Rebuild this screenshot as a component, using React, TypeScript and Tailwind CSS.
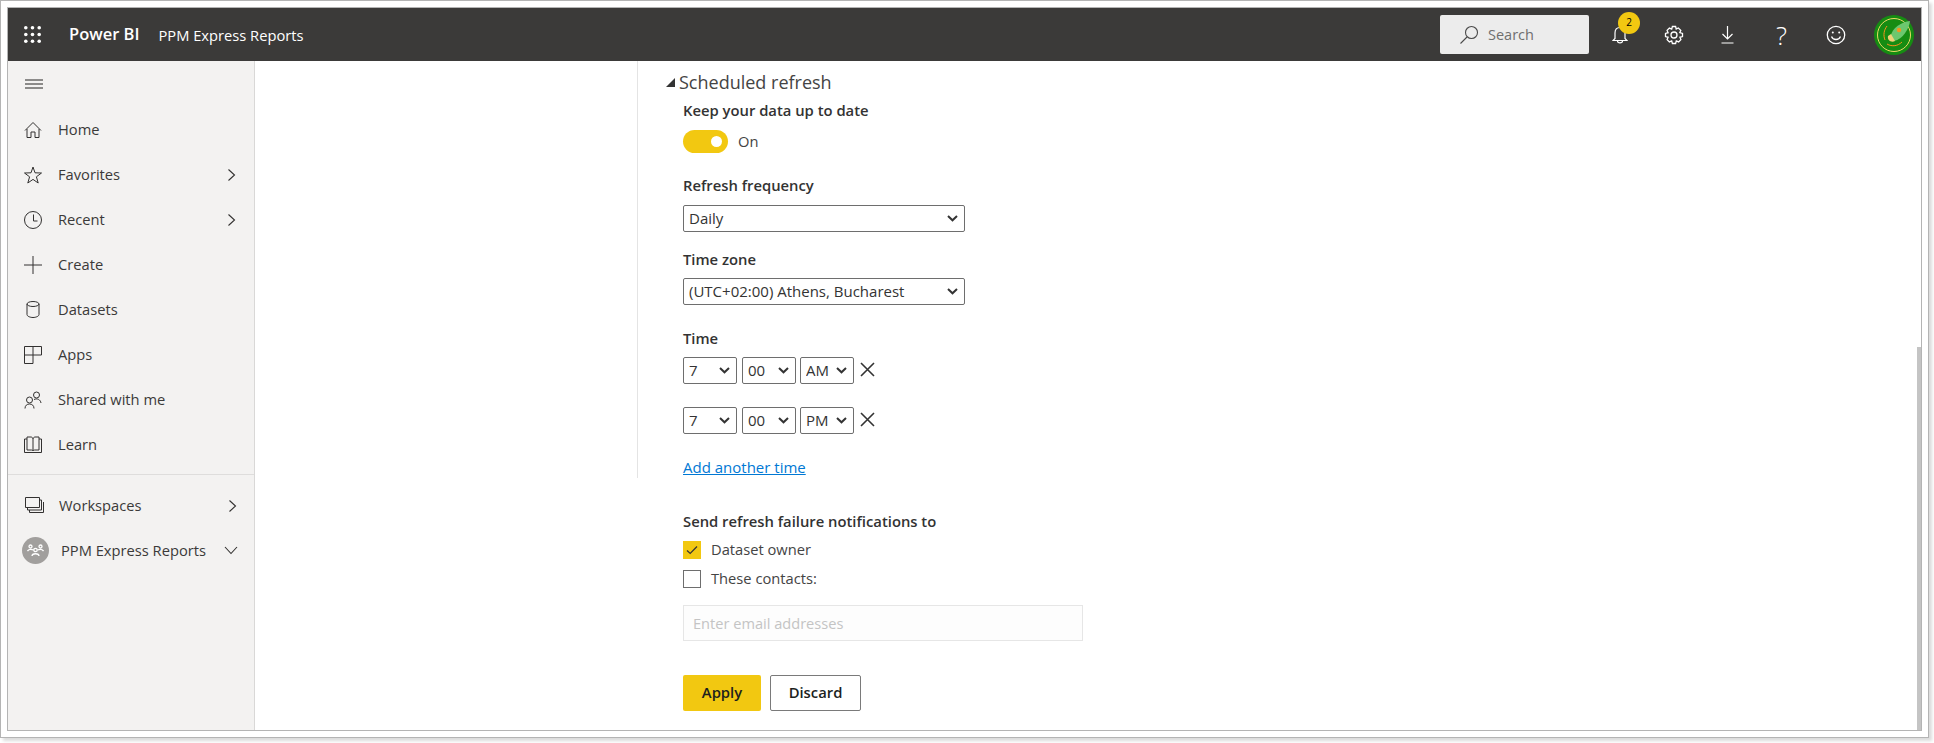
import React from "react";

const stroke = { fill: "none", stroke: "currentColor", strokeWidth: 1 } as const;

const Chevron = () => (
  <svg width="10" height="16" viewBox="0 0 10 16" {...stroke} strokeWidth={1.1}>
    <path d="M1.5 2.5 L7.5 8 L1.5 13.5" />
  </svg>
);

const navTop = [
  { label: "Home", chev: false, w: 18, h: 18, box: "0 0 18 18", icon: <path d="M1 9.5 L9 1.5 L17 9.5 M3 8 V16.5 H7 V11 H11 V16.5 H15 V8" /> },
  { label: "Favorites", chev: true, w: 18, h: 18, box: "0 0 18 18", icon: <path d="M9 1 L11 6.8 L17.5 7 L12.4 10.8 L14.2 17 L9 13.4 L3.8 17 L5.6 10.8 L0.5 7 L7 6.8 Z" /> },
  { label: "Recent", chev: true, w: 18, h: 18, box: "0 0 18 18", icon: <><circle cx="9" cy="9" r="8.5" /><path d="M9.5 3.5 V10 H13.5" /></> },
  { label: "Create", chev: false, w: 18, h: 18, box: "0 0 18 18", icon: <path d="M9 0 V18 M0 9 H18" /> },
  { label: "Datasets", chev: false, w: 14, h: 17, box: "0 0 14 17", icon: <><ellipse cx="7" cy="3" rx="6" ry="2.5" /><path d="M1 3 V13.5 C1 15.2 4 16.5 7 16.5 C10 16.5 13 15.2 13 13.5 V3" /></> },
  { label: "Apps", chev: false, w: 18, h: 18, box: "0 0 18 18", icon: <path d="M0.5 0.5 H17.5 V9 H0.5 Z M0.5 9 V17.5 H9 V0.5" /> },
  { label: "Shared with me", chev: false, w: 18, h: 18, box: "0 0 18 18", icon: <><circle cx="5.5" cy="9" r="3" /><path d="M1 17.5 C1 14.5 3 13 5.5 13 C8 13 10 14.5 10 17.5" /><circle cx="12.5" cy="4" r="3" /><path d="M10 8.5 C13 7 16.5 8.5 17 12" /></> },
  { label: "Learn", chev: false, w: 18, h: 17, box: "0 0 18 17", icon: <path d="M3 1 H7 C8 1 9 2 9 3 V15 C9 14.3 8 14 7 14 H3 Z M15 1 H11 C10 1 9 2 9 3 M15 1 V14 H11 C10 14 9 14.3 9 15 M3 3 H0.5 V16.5 H17.5 V3 H15" /> },
];

const TimeSelect = ({ value, options, width }: { value: string; options: string[]; width: string }) => (
  <div className={`relative h-[27px] ${width}`}>
    <select
      defaultValue={value}
      className="h-full w-full appearance-none rounded-[2px] border border-[#6e6e6e] bg-white pl-[5px] text-[15px] text-[#333333] outline-none"
    >
      {options.map((o) => (
        <option key={o}>{o}</option>
      ))}
    </select>
    <svg className="absolute right-[7px] top-[10px] text-[#333333]" width="11" height="7" viewBox="0 0 11 7" fill="none" stroke="currentColor" strokeWidth="2">
      <path d="M1 1 L5.5 5.3 L10 1" />
    </svg>
  </div>
);

const XIcon = () => (
  <svg className="ml-[6px] mt-[-3px] text-[#333333]" width="15" height="15" viewBox="0 0 15 15" fill="none" stroke="currentColor" strokeWidth="1.6">
    <path d="M1 1 L14 14 M14 1 L1 14" />
  </svg>
);

const TimeRow = ({ period, className }: { period: string; className: string }) => (
  <div className={`flex h-[27px] items-center ${className}`}>
    <TimeSelect value="7" options={["7"]} width="w-[54px]" />
    <TimeSelect value="00" options={["00"]} width="ml-[5px] w-[54px]" />
    <TimeSelect value={period} options={[period]} width="ml-[4px] w-[54px]" />
    <XIcon />
  </div>
);

export default function App() {
  return (
    <div className="h-[743px] w-[1934px] overflow-hidden bg-white font-['Open_Sans',sans-serif] text-[#333333]">
      <div className="h-[738px] w-[1929px] border border-[#b4b4b4] bg-white p-[6px] shadow-[3px_3px_3px_rgba(0,0,0,0.14)]">
        <div className="flex h-[724px] w-[1915px] flex-col border border-[#b4b4b4]">
          {/* Top bar */}
          <header className="flex h-[53px] shrink-0 items-center bg-[#3b3a39] text-white">
            <svg className="ml-[16px]" width="17" height="17" viewBox="0 0 17 17" fill="#ffffff">
              {[1.8, 8.5, 15.2].flatMap((y) =>
                [1.8, 8.5, 15.2].map((x) => <circle key={`${x}-${y}`} cx={x} cy={y} r="1.8" />)
              )}
            </svg>
            <span className="ml-[28px] text-[16.5px] font-semibold">Power BI</span>
            <span className="ml-[19px] mt-[2px] text-[14.7px]">PPM Express Reports</span>

            <div className="ml-auto flex h-[39px] w-[149px] items-center rounded-[2px] bg-[#ececec] pl-[19px] text-[#6f6f6f]">
              <svg width="20" height="20" viewBox="0 0 20 20" fill="none" stroke="#4a4a4a" strokeWidth="1.1">
                <circle cx="12.5" cy="7.5" r="6" />
                <path d="M8 12 L1.5 18.5" />
              </svg>
              <span className="ml-[9px] text-[14.5px]">Search</span>
            </div>

            <div className="relative ml-[23px] flex w-[16px] justify-center">
              <svg width="16" height="18" viewBox="0 0 16 18" fill="none" stroke="#ffffff" strokeWidth="1.2">
                <path d="M3 12.5 V7 C3 3.5 5 1.5 8 1.5 C11 1.5 13 3.5 13 7 V12.5 L15 14.5 H1 Z M5.5 15 C5.5 17.5 10.5 17.5 10.5 15" />
              </svg>
              <span className="absolute left-[6px] top-[-14px] flex h-[22px] w-[22px] items-center justify-center rounded-full bg-[#f2c811] text-[10px] text-black">2</span>
            </div>

            <svg className="ml-[36px]" width="20" height="20" viewBox="0 0 20 20" fill="none" stroke="#ffffff" strokeWidth="1.3">
              <circle cx="10" cy="10" r="3" />
              <path d="M8.4 1.5 H11.6 L12.2 4 L14.3 3 L16.8 5.3 L15.8 7.6 L18.5 8.4 V11.6 L15.9 12.3 L16.9 14.6 L14.6 16.9 L12.3 15.9 L11.6 18.5 H8.4 L7.7 15.9 L5.4 16.9 L3.1 14.6 L4.1 12.3 L1.5 11.6 V8.4 L4.1 7.7 L3.1 5.4 L5.4 3.1 L7.7 4.1 Z" />
            </svg>
            <svg className="ml-[37px]" width="13" height="19" viewBox="0 0 13 19" fill="none" stroke="#ffffff" strokeWidth="1.2">
              <path d="M6.5 1 V14 M1.5 9 L6.5 14 L11.5 9 M0.5 18 H12.5" />
            </svg>
            <span className="ml-[41px] w-[13px] text-center text-[26px] font-light leading-none">?</span>
            <svg className="ml-[38px]" width="20" height="20" viewBox="0 0 20 20" fill="none" stroke="#ffffff" strokeWidth="1.3">
              <circle cx="10" cy="10" r="8.7" />
              <path d="M5.5 11.5 C7 15.5 13 15.5 14.5 11.5" />
              <circle cx="6.8" cy="7.5" r="1" fill="#ffffff" stroke="none" />
              <circle cx="13.2" cy="7.5" r="1" fill="#ffffff" stroke="none" />
            </svg>
            <svg className="ml-[28px] mr-[7px]" width="40" height="40" viewBox="0 0 40 40" fill="none">
              <circle cx="20" cy="20" r="20" fill="#168c12" />
              <circle cx="20" cy="20" r="16.5" stroke="#ecd968" strokeWidth="1" />
              <path d="M16 23 C18 12 28 7 36 6 C35 14 29 24 20 26 Z" fill="#6cc76e" />
              <path d="M14 21 C13 25 17 28 21 26 L17 19 Z" fill="#f0d277" />
              <circle cx="25" cy="15" r="2.2" fill="#f7941d" />
              <path d="M11 25 C9 20 10 15 13 11 M13 29 C18 32 24 31 28 27" stroke="#f7941d" strokeWidth="1" />
            </svg>
          </header>

          <div className="flex min-h-0 flex-1">
            {/* Sidebar */}
            <nav className="flex w-[247px] shrink-0 flex-col border-r border-[#d9d8d7] bg-[#f3f2f1] text-[14.7px] text-[#3b3a39]">
              <svg className="ml-[17px] mt-[18px] text-[#252423]" width="18" height="10" viewBox="0 0 18 10" fill="none" stroke="currentColor" strokeWidth="1">
                <path d="M0 1 H18 M0 5 H18 M0 9 H18" />
              </svg>
              <ul className="mt-[18px]">
                {navTop.map((n) => (
                  <li key={n.label} className="flex h-[45px] items-center pl-[16px] pr-[17px]">
                    <span className="flex w-[18px] justify-center text-[#323130]">
                      <svg width={n.w} height={n.h} viewBox={n.box} {...stroke}>
                        {n.icon}
                      </svg>
                    </span>
                    <span className="ml-[16px] flex-1">{n.label}</span>
                    {n.chev && <span className="text-[#323130]"><Chevron /></span>}
                  </li>
                ))}
              </ul>
              <div className="mt-[7px] h-px bg-[#dedddc]" />
              <div className="mt-[8px] flex h-[45px] items-center pl-[17px] pr-[16px]">
                <svg width="19" height="17" viewBox="0 0 19 17" {...stroke} className="text-[#323130]">
                  <path d="M0.5 0.5 H14.5 V10.5 H0.5 Z M2.5 10.5 V13 H16.5 V3 H14.5 M4.5 13 V15.5 H18.5 V5" />
                </svg>
                <span className="ml-[15px] flex-1">Workspaces</span>
                <span className="text-[#323130]"><Chevron /></span>
              </div>
              <div className="flex h-[45px] items-center pl-[14px] pr-[16px]">
                <span className="flex h-[27px] w-[27px] items-center justify-center rounded-full bg-[#a19f9d]">
                  <svg width="17" height="13" viewBox="0 0 17 13" fill="none" stroke="#ffffff" strokeWidth="1.3">
                    <circle cx="3.5" cy="2.5" r="1.5" />
                    <circle cx="13.5" cy="2.5" r="1.5" />
                    <circle cx="8.5" cy="6" r="1.7" />
                    <path d="M0.5 7 C2 5 4 5 6.5 6 M16.5 7 C15 5 13 5 10.5 6 M5 12 C5 9 12 9 12 12" />
                  </svg>
                </span>
                <span className="ml-[12px] flex-1">PPM Express Reports</span>
                <svg width="14" height="9" viewBox="0 0 14 9" {...stroke} strokeWidth={1.1} className="text-[#323130]">
                  <path d="M1 1 L7 7.5 L13 1" />
                </svg>
              </div>
            </nav>

            {/* Content */}
            <main className="flex min-w-0 flex-1 bg-white">
              <div className="min-w-0 flex-1 pl-[382px]">
                <section className="h-[417px] w-[460px] border-l border-[#e4e4e4] pl-[45px] pt-[8px]">
                  <h2 className="ml-[-17px] flex h-[26px] items-center text-[18px] font-normal text-[#444444]">
                    <svg className="mr-[4px]" width="9" height="9" viewBox="0 0 9 9" fill="#333333">
                      <path d="M9 0 V9 H0 Z" />
                    </svg>
                    Scheduled refresh
                  </h2>
                  <Label className="mt-[6px]">Keep your data up to date</Label>
                  <div className="mt-[9px] flex h-[23px] items-center">
                    <span className="flex h-[23px] w-[45px] items-center justify-end rounded-full bg-[#f2c811] pr-[6px]">
                      <span className="h-[11px] w-[11px] rounded-full bg-white" />
                    </span>
                    <span className="ml-[10px] pb-[1px] text-[14.7px] text-[#444444]">On</span>
                  </div>
                  <Label className="mt-[23px]">Refresh frequency</Label>
                  <TimeSelect value="Daily" options={["Daily", "Weekly"]} width="mt-[9px] w-[282px]" />
                  <Label className="mt-[18px]">Time zone</Label>
                  <TimeSelect value="(UTC+02:00) Athens, Bucharest" options={["(UTC+02:00) Athens, Bucharest"]} width="mt-[8px] w-[282px]" />
                  <Label className="mt-[24px]">Time</Label>
                  <TimeRow period="AM" className="mt-[8px]" />
                  <TimeRow period="PM" className="mt-[23px]" />
                  <a href="#" className="mt-[24px] block h-[20px] text-[15px] leading-[18px] text-[#0078d4] underline">
                    Add another time
                  </a>
                </section>

                <div className="ml-[46px]">
                  <div className="h-[54px] pt-[34px]">
                    <Label className="">Send refresh failure notifications to</Label>
                  </div>
                  <div className="mt-[9px] flex h-[18px] items-center">
                    <span className="flex h-[18px] w-[18px] items-center justify-center bg-[#f2c811]">
                      <svg width="12" height="10" viewBox="0 0 12 10" fill="none" stroke="#333333" strokeWidth="1.2">
                        <path d="M1 5.5 L4.2 8.5 L11 1.5" />
                      </svg>
                    </span>
                    <span className="ml-[10px] pb-[2px] text-[14.7px] text-[#444444]">Dataset owner</span>
                  </div>
                  <div className="mt-[11px] flex h-[18px] items-center">
                    <span className="h-[18px] w-[18px] border border-[#6e6e6e] bg-white" />
                    <span className="ml-[10px] pb-[2px] text-[14.7px] text-[#444444]">These contacts:</span>
                  </div>
                  <input
                    disabled
                    placeholder="Enter email addresses"
                    className="mt-[17px] block h-[36px] w-[400px] border border-[#e6e6e6] bg-[#fdfdfd] pl-[9px] text-[14.6px] placeholder:text-[#c4c4c4]"
                  />
                  <div className="mt-[34px] flex">
                    <button className="h-[36px] w-[78px] rounded-[2px] bg-[#f2c811] pb-[2px] text-[14.8px] font-semibold text-[#201f1e]">Apply</button>
                    <button className="ml-[9px] h-[36px] w-[91px] rounded-[2px] border border-[#7a7a7a] bg-white pb-[2px] text-[14.8px] font-semibold text-[#201f1e]">Discard</button>
                  </div>
                </div>
              </div>
              <div className="flex w-[4px] shrink-0 flex-col">
                <div className="h-[286px]" />
                <div className="flex-1 bg-[#c4c4c4]" />
              </div>
            </main>
          </div>
        </div>
      </div>
    </div>
  );
}

function Label({ children, className }: { children: React.ReactNode; className: string }) {
  return <div className={`h-[20px] text-[14.8px] font-semibold leading-[18px] text-[#333333] ${className}`}>{children}</div>;
}
